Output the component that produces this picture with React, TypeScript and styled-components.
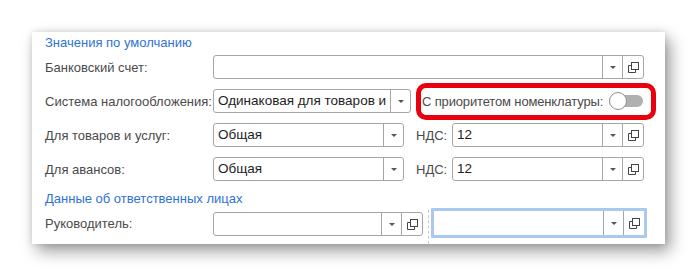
import React from "react";
import styled, { createGlobalStyle, css } from "styled-components";

const Global = createGlobalStyle`
  html, body { margin: 0; padding: 0; background: #ffffff; }
  body { font-family: Arial, "Liberation Sans", sans-serif; }
`;

const Page = styled.div`
  width: 697px;
  height: 276px;
  padding: 32px 0 0 32px;
  box-sizing: border-box;
  background: #fff;
`;

const Panel = styled.div`
  width: 633px;
  height: 212px;
  background: #fff;
  box-shadow: 5px 7px 15px rgba(0, 0, 0, 0.4), 0 0 6px rgba(0, 0, 0, 0.12);
  padding: 3px 0 0 13px;
  box-sizing: border-box;
  display: flex;
  flex-direction: column;
  font-size: 13px;
`;

const GroupTitle = styled.div<{ $gap?: number }>`
  height: 16px;
  line-height: 16px;
  color: #2f72d6;
  margin-top: ${(p) => p.$gap ?? 0}px;
`;

const Row = styled.div<{ $gap: number; $tall?: boolean }>`
  display: flex;
  align-items: ${(p) => (p.$tall ? "flex-start" : "center")};
  height: ${(p) => (p.$tall ? "auto" : "24px")};
  margin-top: ${(p) => p.$gap}px;
  ${(p) =>
    p.$tall &&
    css`
      flex: 1;
    `}
`;

const Label = styled.div<{ $w: number; $top?: number }>`
  width: ${(p) => p.$w}px;
  flex: none;
  color: #4a4a4a;
  white-space: nowrap;
  margin-top: ${(p) => p.$top ?? 0}px;
`;

const Field = styled.div<{ $w: number; $focused?: boolean; $top?: number }>`
  width: ${(p) => p.$w}px;
  height: ${(p) => (p.$focused ? 30 : 24)}px;
  flex: none;
  box-sizing: border-box;
  border: ${(p) => (p.$focused ? "3px solid #a9c9ee" : "1px solid #a6a6a6")};
  border-radius: ${(p) => (p.$focused ? 1 : 3)}px;
  background: #fff;
  display: flex;
  align-items: stretch;
  overflow: hidden;
  margin-top: ${(p) => p.$top ?? 0}px;
`;

const Value = styled.div`
  flex: 1;
  min-width: 0;
  padding-left: 4px;
  line-height: 22px;
  font-size: 13.5px;
  color: #1e1e1e;
  white-space: nowrap;
  overflow: hidden;
`;

const FieldButton = styled.div<{ $w?: number }>`
  width: ${(p) => p.$w ?? 20}px;
  flex: none;
  box-sizing: border-box;
  border-left: 1px solid #a6a6a6;
  display: flex;
  align-items: center;
  justify-content: center;
  color: #555;
`;

const Arrow = styled.div`
  width: 0;
  height: 0;
  border-left: 3px solid transparent;
  border-right: 3px solid transparent;
  border-top: 3px solid #555;
  margin-top: 1px;
`;

const OpenIcon = () => (
  <svg width="11" height="11" viewBox="0 0 11 11" fill="none" stroke="#444" strokeWidth="1">
    <rect x="3.5" y="0.5" width="7" height="7" />
    <path d="M3 3.5 H0.5 V10.5 H7.5 V8" />
  </svg>
);

const Spacer = styled.div<{ $w: number }>`
  width: ${(p) => p.$w}px;
  flex: none;
`;

const Highlight = styled.div`
  position: relative;
  width: 240px;
  height: 24px;
  margin-left: 5px;
  flex: none;
  display: flex;
  align-items: center;
  box-sizing: border-box;
  padding: 0 13px 0 6px;
  &::after {
    content: "";
    position: absolute;
    left: 0;
    right: 0;
    top: -6px;
    bottom: -7px;
    border: 5px solid #e8000e;
    border-radius: 10px;
    pointer-events: none;
  }
`;

const HighlightText = styled.span`
  flex: 1;
  color: #4a4a4a;
  white-space: nowrap;
  letter-spacing: -0.15px;
`;

const Toggle = styled.div`
  position: relative;
  width: 34px;
  height: 12px;
  border-radius: 6px;
  background: #b0b0b0;
  flex: none;
`;

const Knob = styled.div`
  position: absolute;
  left: 0;
  top: -3px;
  width: 18px;
  height: 18px;
  box-sizing: border-box;
  border-radius: 50%;
  background: #fff;
  border: 1px solid #8f8f8f;
`;

const Dashed = styled.div`
  width: 0;
  align-self: stretch;
  margin: 2px 2px 0 5px;
  border-left: 1px dashed #c8c8c8;
`;

const Select = ({
  w,
  value,
  open = true,
  focused,
  top,
}: {
  w: number;
  value?: string;
  open?: boolean;
  focused?: boolean;
  top?: number;
}) => (
  <Field $w={w} $focused={focused} $top={top}>
    <Value>{value}</Value>
    <FieldButton>
      <Arrow />
    </FieldButton>
    {open && (
      <FieldButton $w={21}>
        <OpenIcon />
      </FieldButton>
    )}
  </Field>
);

export default function App() {
  return (
    <>
      <Global />
      <Page>
        <Panel>
          <GroupTitle>Значения по умолчанию</GroupTitle>
          <Row $gap={4}>
            <Label $w={168}>Банковский счет:</Label>
            <Select w={431} />
          </Row>
          <Row $gap={10}>
            <Label $w={168}>Система налогообложения:</Label>
            <Select w={198} value="Одинаковая для товаров и услуг" open={false} />
            <Highlight>
              <HighlightText>С приоритетом номенклатуры:</HighlightText>
              <Toggle>
                <Knob />
              </Toggle>
            </Highlight>
          </Row>
          <Row $gap={10}>
            <Label $w={168}>Для товаров и услуг:</Label>
            <Select w={191} value="Общая" open={false} />
            <Spacer $w={12} />
            <Label $w={36}>НДС:</Label>
            <Select w={192} value="12" />
          </Row>
          <Row $gap={10}>
            <Label $w={168}>Для авансов:</Label>
            <Select w={191} value="Общая" open={false} />
            <Spacer $w={12} />
            <Label $w={36}>НДС:</Label>
            <Select w={192} value="12" />
          </Row>
          <GroupTitle $gap={10}>Данные об ответственных лицах</GroupTitle>
          <Row $gap={1} $tall>
            <Label $w={168} $top={8}>Руководитель:</Label>
            <Select w={210} top={4} />
            <Dashed />
            <Select w={216} focused />
          </Row>
        </Panel>
      </Page>
    </>
  );
}
